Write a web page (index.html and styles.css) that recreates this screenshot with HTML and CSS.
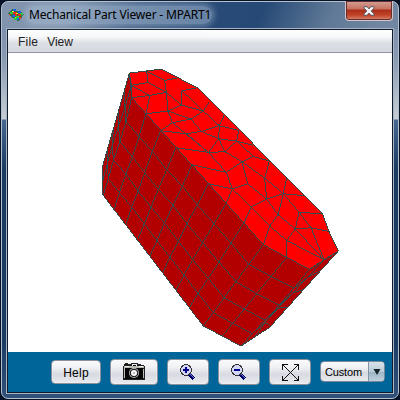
FILE: index.html
```html
<!DOCTYPE html>
<html lang="en">
<head>
<meta charset="utf-8">
<title>Mechanical Part Viewer - MPART1</title>
<link rel="stylesheet" href="styles.css">
</head>
<body>
<div class="window">
  <header class="titlebar">
    <svg class="app-icon" width="16" height="12" viewBox="0 0 16 12" shape-rendering="crispEdges">
      <path fill="#28713c" d="M0 4L5 0l4 2 3 0 4 3-2 3-4 4-5-3-3-2z"/>
      <path fill="#21cf45" d="M2 3h3v2H2zM8 7h3v2H8zM12 4h3v2h-3zM6 9h3v2H6z"/>
      <path fill="#1763e8" d="M5 0h3v2H5zM10 2h3v2h-3zM4 6h3v2H4zM9 9h2v2H9z"/>
      <path fill="#f02a18" d="M5 3h4v2H5zM1 5h2v1H1zM10 5h3v2h-3zM11 8h2v2h-2zM7 5h2v2H7z"/>
      <path fill="#efe02a" d="M4 2h2v1H4zM8 4h2v1H8zM7 8h1v1H7z"/>
    </svg>
    <h1 class="title">Mechanical Part Viewer - MPART1</h1>
    <button class="close" aria-label="Close">
      <svg width="12" height="10" viewBox="0 0 12 10"><path d="M1 .7h3l2 2.200L8 .7h3v1.400L8.200 5 11 7.900v1.400H8L6 7.100 4 9.300H1V7.900L3.800 5 1 2.100z" fill="#f5f5f5" stroke="#4c5262" stroke-width=".9"/></svg>
    </button>
  </header>
  <main class="client">
    <nav class="menu"><span class="file">File</span><span>View</span></nav>
    <section class="viewport">
      <svg class="part" width="384" height="299" viewBox="8 53 384 299" shape-rendering="crispEdges">
        <g transform="translate(90 60.400) scale(.333333)">
          <path class="side" d="M118 38L38 317V403L340 797 453 857 540 800 745 572 658 627z"/>
          <path class="top" d="M118 38L213 26 323 82 697 459 717 513 745 572 658 627 520 553 125 112z"/>
          <g class="mesh">
            <path d="M125 112L108 183 90 243 70 300 55 355 40 403M168 160L147 229 127 290 108 340 88 397 73 445M212 211L187 273 164 337 144 392 125 440 108 490M258 262L230 328 205 387 183 440 163 490 143 537M306 313L277 377 249 435 223 488 201 541 180 586M355 370L322 434 291 490 265 542 240 591 218 636M408 430L372 490 338 547 308 598 282 644 258 689M462 487L423 548 387 605 355 654 324 699 298 742M520 553L476 612 438 664 402 712 370 757 340 797M590 592L543 648 500 700 463 746 428 789 398 826M658 627L612 683 568 734 525 779 487 820 453 857"/>
            <path d="M102 94L105 140 108 183 147 229 187 273 230 328 277 377 322 434 372 490 423 548 476 612 543 648 612 683 655 649 692 631"/>
            <path d="M86 150L85 198 90 243 127 290 164 337 205 387 249 435 291 490 338 547 387 605 438 664 500 700 568 734 607 699 642 687"/>
            <path d="M70 206L67 254 70 300 108 340 144 392 183 440 223 488 265 542 308 598 355 654 402 712 463 746 525 779 565 743 592 742"/>
            <path d="M54 262L52 310 55 355 88 397 125 440 163 490 201 541 240 591 282 644 324 699 370 757 428 789 487 820 526 785 542 798"/>
            <path d="M124 75L105 140 85 198 67 254 52 310 38 362M702 598L655 649 607 699 565 743 526 785 496 828"/>
            <path d="M118 38L124 75 125 112 179 105 229 96 174 66 124 75 179 105 168 160 234 152 229 96 224 60 265 52M174 66L170 33 224 60M229 96L274 134 276 91 323 82M276 91L340 152 274 134 234 152 303 176 340 152 358 124M234 152L247 187 212 211 290 220 334 213 303 176 247 187 355 276 258 262M340 152L388 196 334 213 386 235 388 196 402 165M388 196L446 210M386 235L440 242 446 210M440 242L490 255M386 235L355 276 405 274 386 235M440 242L405 274 456 304 490 288 440 242M490 288L538 302 524 353 456 304 409 336 355 276M306 313L409 336 427 386 355 370M456 304L473 370 427 386 408 430M473 370L530 416 524 353 580 400 590 352M290 220L355 276M427 386L484 440 530 416 580 400 643 406M530 416L564 463 580 400 627 455 697 461M484 440L462 487M484 440L539 497 564 463 616 506 627 455 663 502 717 513M539 497L520 553M539 497L590 540 616 506 663 502 702 598 616 506M590 592L590 540 702 598 745 572M702 598L658 627"/>
          </g>
          <path class="outline" d="M118 38L38 317V403L340 797 453 857 540 800 745 572 717 513 697 459 323 82 213 26 118 38 125 112 520 553 658 627 745 572"/>
        </g>
      </svg>
    </section>
    <footer class="tools">
      <button class="btn help">Help</button>
      <button class="btn camera" aria-label="Capture">
        <svg width="24" height="18" viewBox="0 0 24 18" shape-rendering="crispEdges">
          <path fill="#202020" d="M3 0h3v1h3V0h7v1h3v1h3v1h1v14H1V3h1V1h1z"/>
          <path fill="#b9b9b1" d="M2 3h20v2H2zM2 5h1v10H2zM21 6h1v9h-1z"/>
          <path fill="#eee" d="M3 3h4v1H3zM10 1h5v2h-5zM17 3h4v1h-4z"/>
          <path fill="#050505" d="M3 5h18v11H3zM11 2h3v1h-3z"/>
          <g shape-rendering="auto"><circle cx="12" cy="10" r="5" fill="#ccc"/><circle cx="12" cy="10" r="4.300" fill="#222"/><circle cx="12" cy="10" r="3" fill="#fff"/><circle cx="12" cy="10" r="1.200" fill="#bbb"/></g>
        </svg>
      </button>
      <button class="btn" aria-label="Zoom in">
        <svg width="16" height="16" viewBox="0 0 16 16" shape-rendering="crispEdges">
          <path d="M9 10l5 5" stroke="#000070" stroke-width="3.200"/><path d="M10 10l4 4" stroke="#7777cc"/>
          <circle cx="6" cy="6" r="5.400" fill="#d4d4f5" stroke="#333"/>
          <path d="M6 3v6M3 6h6" stroke="#00008a" stroke-width="2"/>
        </svg>
      </button>
      <button class="btn" aria-label="Zoom out">
        <svg width="16" height="16" viewBox="0 0 16 16" shape-rendering="crispEdges">
          <path d="M9 10l5 5" stroke="#000070" stroke-width="3.200"/><path d="M10 10l4 4" stroke="#7777cc"/>
          <circle cx="6" cy="6" r="5.400" fill="#d4d4f5" stroke="#333"/>
          <path d="M3 6h6" stroke="#00008a" stroke-width="2"/>
        </svg>
      </button>
      <button class="btn" aria-label="Fit to view">
        <svg width="17" height="17" viewBox="0 0 17 17" shape-rendering="crispEdges" fill="none" stroke="#111">
          <path d="M.5 5.500v-5h5M11.500.5h5v5M16.500 11.500v5h-5M5.500 16.500h-5v-5M.5.5l16 16M16.500.5l-16 16"/>
        </svg>
      </button>
      <div class="combo"><span class="value">Custom</span><span class="arrow"><svg width="8" height="6" viewBox="0 0 8 6"><path d="M.5 0h7L4 6z" fill="#182428"/></svg></span></div>
    </footer>
  </main>
</div>
</body>
</html>
```
FILE: styles.css
```css
* { box-sizing: border-box; }
body {
  margin: 0;
  width: 400px;
  height: 400px;
  overflow: hidden;
  padding: 1px;
  background: #061327;
  font-family: "Liberation Sans", Arial, sans-serif;
}
.window {
  width: 398px;
  height: 398px;
  border: 1px solid #b5c1cf;
  border-radius: 7px;
  padding: 0 5px 4px;
  background:
    linear-gradient(112deg, #8293ad 0, #8395ae 65px, #48658b 125px, #284a76 205px, #264a76 245px, #607997 310px, #7186a1 360px) 0 0 / 100% 27px no-repeat,
    linear-gradient(#7488a6, #8798b2 55px, #c8ced7 117px, #486790 118px, #1d3c64 165px, #1c3c64 340px, #30507a);
}
.titlebar {
  display: flex;
  height: 27px;
  align-items: flex-start;
  padding-left: 1px;
}
.app-icon { margin-top: 7px; }
.title {
  margin: 4px 0 0 2px;
  padding-left: 3px;
  width: 186px;
  height: 18px;
  font: 400 12px/18px "Noto Sans", sans-serif;
  letter-spacing: -.17px;
  white-space: nowrap;
  color: #000;
  border-radius: 9px;
  background: rgba(165,188,212,.5);
  box-shadow: 0 0 6px 2px rgba(165,188,212,.5);
}
.close {
  display: flex;
  justify-content: center;
  align-items: center;
  width: 48px;
  height: 20px;
  margin: -1px 0 0 auto;
  padding: 0;
  border: 1px solid #d5c5c9;
  border-top: 0;
  border-radius: 0 0 4px 4px;
  background: linear-gradient(#d3a297, #c7705f 8px, #ab2e19 9px, #c04328 14px, #d98a70);
  box-shadow: inset 0 0 0 1px #642f32;
}
.client {
  width: 386px;
  height: 364px;
  border: 1px solid #101c2b;
  outline: 1px solid #a7b5c5;
  background: #fff;
}
.menu {
  display: flex;
  gap: 9px;
  height: 23px;
  padding-left: 10px;
  border-bottom: 1px solid #9293a8;
  background: linear-gradient(#fff, #f6f7f8 7px, #dcdfe4 13px, #d5d8df);
  font-size: 12px;
  line-height: 24px;
  color: #222;
}
.file { letter-spacing: .2px; }
.viewport { height: 299px; }
.part { display: block; }
.top { fill: #f00; }
.side { fill: #b20000; }
.mesh, .outline {
  fill: none;
  stroke: #334b4b;
  stroke-width: 3;
}
.tools {
  display: flex;
  align-items: center;
  gap: 9px;
  height: 40px;
  padding-left: 43px;
  background: #006699;
}
.btn {
  display: flex;
  flex: none;
  align-items: center;
  justify-content: center;
  width: 42px;
  height: 26px;
  padding: 0;
  border: 1px solid #8b929c;
  border-radius: 4px;
  background: linear-gradient(#fafafb, #f0f1f4 30%, #d7dae1 60%, #e9ebef);
  box-shadow: inset 0 0 0 1px rgba(255,255,255,.25);
}
.help {
  width: 50px;
  height: 24px;
  padding-top: 1px;
  font: 12px "Liberation Sans", Arial, sans-serif;
  letter-spacing: .25px;
  color: #000;
}
.camera { width: 48px; }
.combo {
  display: flex;
  width: 65px;
  height: 21px;
  margin-top: -1px;
  overflow: hidden;
  border: 1px solid #78899b;
  border-radius: 4px;
  background: linear-gradient(#fafafb, #f0f1f4 30%, #d7dae1 60%, #e9ebef);
  font-size: 11px;
  line-height: 20px;
  color: #000;
}
.value { width: 47px; padding-left: 4px; letter-spacing: -.15px; }
.arrow {
  display: flex;
  flex: 1;
  align-items: center;
  justify-content: center;
  border-left: 1px solid #8195a7;
  background: linear-gradient(#d8e2e9, #b9cbd8 50%, #9eb6c7 55%, #bed0dc);
}
```
